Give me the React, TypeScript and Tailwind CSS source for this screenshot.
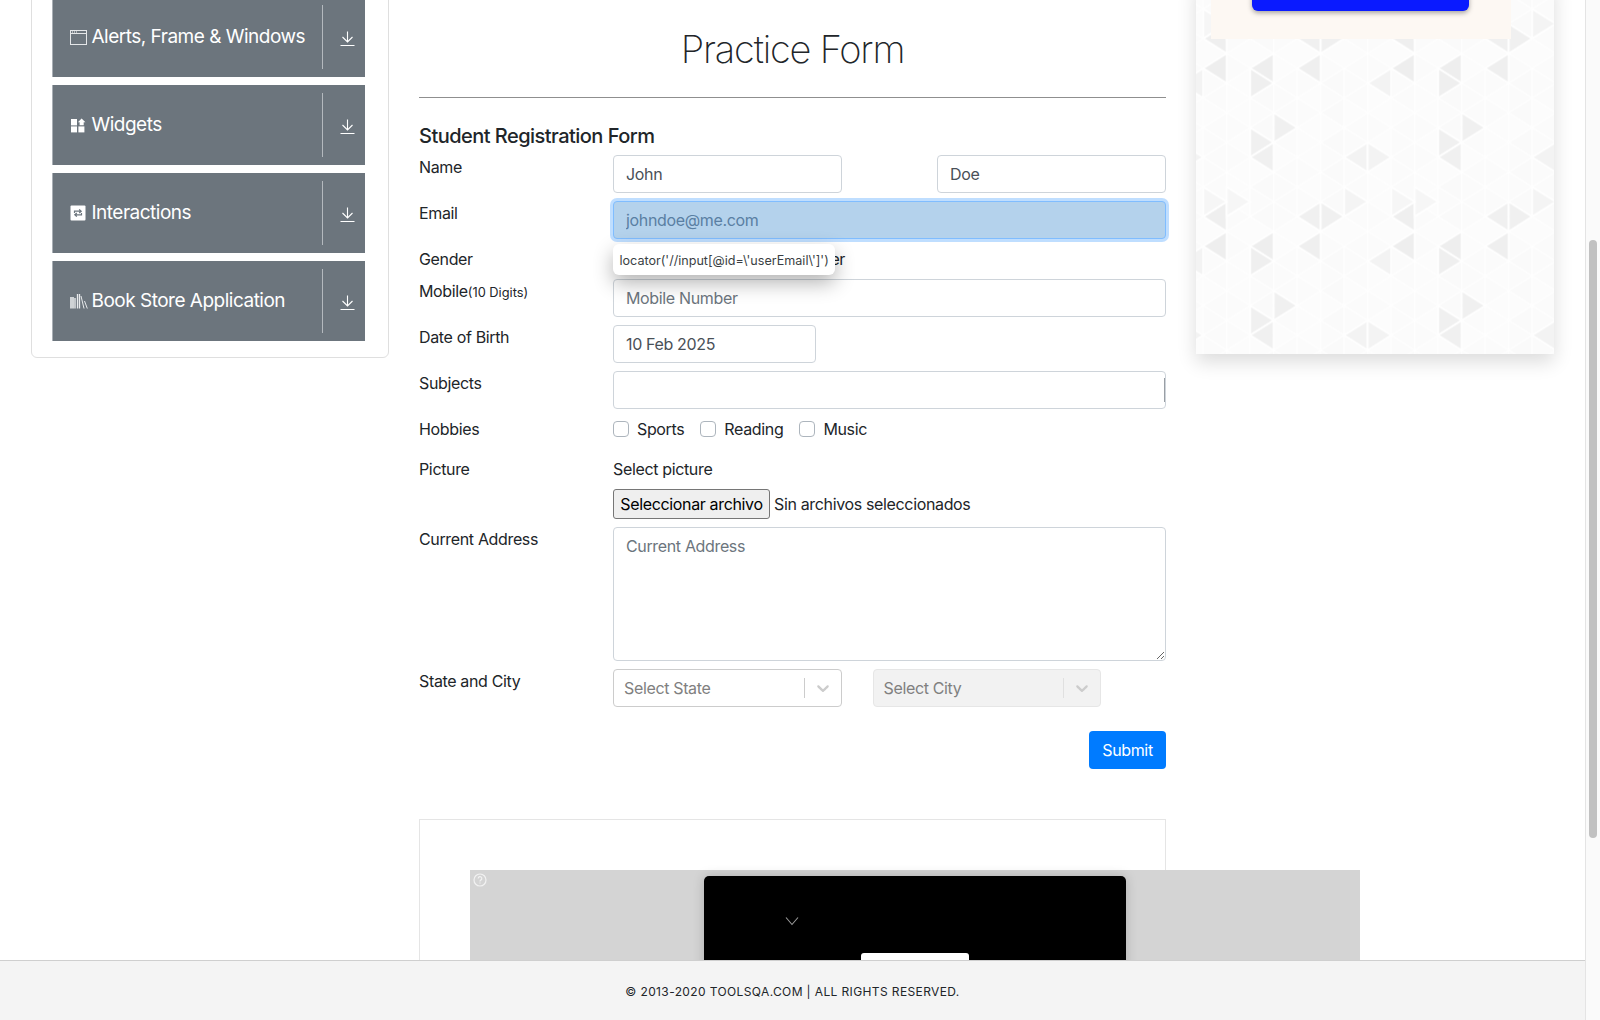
import type { ReactNode } from 'react'

const TILE_W = 188
const TILE_H = 178
const COL = 23.5
const ROW = 14.83

// dir, edge column, centre row, shade
const darkTriangles: [string, number, number, string][] = [
  ['L', 1, 1, '#eeeeee'],
  ['L', 3, 1, '#eeeeee'],
  ['L', 5, 1, '#efefef'],
  ['R', 2, 2, '#efefef'],
  ['L', 8, 2, '#f3f3f3'],
  ['R', 3, 5, '#f0f0f0'],
  ['R', 2, 6, '#f0f0f0'],
  ['L', 3, 7, '#f0f0f0'],
  ['L', 7, 7, '#f3f3f3'],
  ['R', 7, 7, '#f3f3f3'],
  ['L', 1, 11, '#efefef'],
  ['L', 5, 11, '#f0f0f0'],
  ['R', 5, 11, '#f0f0f0'],
  ['R', 6, 10, '#f4f4f4'],
  ['R', 1, 10, '#f6f6f6'],
  ['R', 0, 10, '#f6f6f6'],
]

function trianglePoints(dir: string, edge: number, c: number) {
  const x = edge * COL
  const y = c * ROW
  const tip = dir === 'L' ? x - COL : x + COL
  return `${x},${y - ROW} ${x},${y + ROW} ${tip},${y}`
}

function baseTriangles() {
  const out: { dir: string; edge: number; c: number; fill: string }[] = []
  const shades = ['#fbfbfb', '#fafafa', '#fbfbfb', '#fbfbfb', '#fcfcfc', '#fcfcfc']
  for (let s = 0; s < 8; s++) {
    for (let c = 1; c < 12; c++) {
      if ((s + 1 + c) % 2 === 0) out.push({ dir: 'L', edge: s + 1, c, fill: shades[(s * 5 + c * 3) % 6] })
      if ((s + c) % 2 === 0) out.push({ dir: 'R', edge: s, c, fill: shades[(s * 7 + c) % 6] })
    }
  }
  return out
}

function TrianglePattern() {
  return (
    <svg className="absolute inset-0 h-full w-full" aria-hidden="true">
      <defs>
        <pattern id="tri" x="7.2" y="73.47" width={TILE_W} height={TILE_H} patternUnits="userSpaceOnUse">
          <rect width={TILE_W} height={TILE_H} fill="#fcfcfc" />
          {baseTriangles().map((t, i) => (
            <polygon key={i} points={trianglePoints(t.dir, t.edge, t.c)} fill={t.fill} stroke="#ffffff" strokeWidth="1.2" />
          ))}
          {darkTriangles.map(([dir, edge, c, fill], i) => (
            <polygon key={i} points={trianglePoints(dir, edge, c)} fill={fill} stroke="#ffffff" strokeWidth="1.8" />
          ))}
        </pattern>
      </defs>
      <rect width="100%" height="100%" fill="url(#tri)" />
    </svg>
  )
}

function FrameIcon() {
  return (
    <svg width="17" height="15" viewBox="0 0 17 15" fill="none" stroke="#e4e6e8" strokeWidth="1">
      <rect x="0.5" y="0.5" width="16" height="14" />
      <line x1="0.5" y1="3.5" x2="16.5" y2="3.5" />
      <path d="M2 2h1M4 2h1M6 2h1" stroke="#ffffff" />
    </svg>
  )
}

function WidgetIcon() {
  return (
    <svg width="16" height="15" viewBox="0 0 16 15" fill="#ffffff">
      <rect x="1" y="1" width="6" height="6.4" />
      <rect x="1" y="8.4" width="6" height="6" />
      <rect x="8.4" y="8.4" width="6" height="6" />
      <path d="M11.6 0.4L15.4 4.2L13.7 4.2L13.7 7.2L9.6 7.2L9.6 4.2L7.9 4.2Z" />
    </svg>
  )
}

function InteractionIcon() {
  return (
    <svg width="16" height="16" viewBox="0 0 16 16">
      <rect x="0.5" y="0.5" width="15" height="15" rx="1" fill="#ffffff" />
      <path d="M4.5 8V6.2h6M9.2 4.4l2 1.8-2 1.8M11.5 8v1.8h-6M6.8 11.6l-2-1.8 2-1.8" fill="none" stroke="#6c757d" strokeWidth="1.2" />
    </svg>
  )
}

function BooksIcon() {
  return (
    <svg width="18" height="16" viewBox="0 0 18 16" fill="none" stroke="#e8eaec">
      <path d="M1 4v11.5M3 4v11.5" strokeWidth="1.6" />
      <path d="M5 5v10.5" strokeWidth="1.4" />
      <path d="M7.5 1v14.5M9.5 1v14.5" strokeWidth="1.3" />
      <path d="M11 3l3 12.5M14.5 8l2.8 7.5" strokeWidth="1" />
    </svg>
  )
}

function DownloadIcon() {
  return (
    <svg width="15" height="15" viewBox="0 0 15 15" fill="none" stroke="#ffffff" strokeWidth="1.1">
      <path d="M7.5 0.5V11M2.5 6l5 5 5-5M0.5 14.5h14" />
    </svg>
  )
}

const groups: { name: string; icon: ReactNode }[] = [
  { name: 'Alerts, Frame & Windows', icon: <FrameIcon /> },
  { name: 'Widgets', icon: <WidgetIcon /> },
  { name: 'Interactions', icon: <InteractionIcon /> },
  { name: 'Book Store Application', icon: <BooksIcon /> },
]

function Sidebar() {
  return (
    <div className="ml-[31px] -mt-[20px] h-fit w-[358px] shrink-0 rounded-[6px] border border-[#dfdfdf] bg-white pt-[16px] pb-[16px] pl-[20px] pr-[23px]">
      <div className="flex flex-col gap-[8px]">
        {groups.map((g) => (
          <div key={g.name} className="flex h-[80px] items-center border-l border-[#a9afb5] bg-[#6c757d] text-white">
            <div className="flex min-w-0 flex-1 items-center pl-[17px]">
              <span className="flex w-[22px] shrink-0 items-center">{g.icon}</span>
              <span className="mt-[1px] -ml-[0.5px] text-[19px] tracking-[-0.5px] whitespace-nowrap">{g.name}</span>
            </div>
            <div className="h-[64px] w-px bg-[#b4b9be]" />
            <div className="flex w-[42px] items-center justify-center pt-[2px] pl-[6px]">
              <DownloadIcon />
            </div>
          </div>
        ))}
      </div>
    </div>
  )
}

function Row({ label, children, className = 'mb-[8px]' }: { label: ReactNode; children: ReactNode; className?: string }) {
  return (
    <div className={`flex ${className}`}>
      <div className="w-[194px] shrink-0 text-[16px] leading-[24px] text-[#212529]">{label}</div>
      {children}
    </div>
  )
}

const inputCls =
  'h-[38px] rounded-[4px] border border-[#ced4da] bg-white px-[12px] text-[16px] text-[#495057] placeholder:text-[#6c757d] outline-none'

function Chevron({ color }: { color: string }) {
  return (
    <svg width="20" height="20" viewBox="0 0 20 20" fill={color}>
      <path d="M4.516 7.548c0.436-0.446 1.043-0.481 1.576 0l3.908 3.747 3.908-3.747c0.533-0.481 1.141-0.446 1.574 0 0.436 0.445 0.408 1.197 0 1.615-0.406 0.418-4.695 4.502-4.695 4.502-0.217 0.223-0.502 0.335-0.787 0.335s-0.57-0.112-0.789-0.335c0 0-4.287-4.084-4.695-4.502s-0.436-1.17 0-1.615z" />
    </svg>
  )
}

function FakeSelect({ text, disabled }: { text: string; disabled?: boolean }) {
  return (
    <div
      className={`flex h-[38px] w-[228.5px] items-center rounded-[4px] border pl-[10px] ${
        disabled ? 'border-[#e6e6e6] bg-[#f2f2f2]' : 'border-[#cccccc] bg-white'
      }`}
    >
      <span className="flex-1 text-[16px] text-[#808080]">{text}</span>
      <span className={`h-[20px] w-px ${disabled ? 'bg-[#e0e0e0]' : 'bg-[#cccccc]'}`} />
      <span className="flex w-[36px] items-center justify-center">
        <Chevron color="#cccccc" />
      </span>
    </div>
  )
}

function CheckOption({ label, className }: { label: string; className: string }) {
  return (
    <label className={`flex items-center ${className}`}>
      <span className="mr-[8px] h-[16px] w-[16px] rounded-[4px] border border-[#adb5bd] bg-white" />
      <span className="text-[16px] leading-[24px] text-[#212529]">{label}</span>
    </label>
  )
}

function RadioOption({ label }: { label: string }) {
  return (
    <label className="mr-[16px] flex items-center">
      <span className="mr-[8px] h-[16px] w-[16px] rounded-full border border-[#adb5bd] bg-white" />
      <span className="text-[16px] leading-[24px] text-[#212529]">{label}</span>
    </label>
  )
}

function PracticeForm() {
  return (
    <div className="ml-[30px] w-[747px] shrink-0 pt-[25px]">
      <h1 className="text-center text-[38px] leading-[48px] font-extralight tracking-[-1.2px] text-[#212529]">Practice Form</h1>
      <div className="mt-[24px] h-px bg-[#8f8f8f]" />
      <h5 className="mt-[26px] mb-[7px] text-[20px] leading-[24px] font-medium tracking-[-0.53px] text-[#212529]">
        Student Registration Form
      </h5>

      <Row label="Name">
        <input readOnly className={`${inputCls} w-[228.5px]`} value="John" />
        <input readOnly className={`${inputCls} ml-[95.5px] w-[229px]`} value="Doe" />
      </Row>
      <Row label="Email">
        <input
          readOnly
          className="h-[38px] flex-1 rounded-[4px] border border-[#80bdff] bg-[#b4d2ec] px-[12px] text-[16px] text-[#5a7fa3] shadow-[0_0_0_3px_rgba(0,123,255,0.25)] outline-none"
          value="johndoe@me.com"
        />
      </Row>
      <div className="relative">
        <Row label="Gender">
          <div className="flex">
            <RadioOption label="Male" />
            <RadioOption label="Female" />
            <RadioOption label="Other" />
          </div>
        </Row>
        <div className="absolute top-[-3px] left-[194px] flex h-[31px] w-[222px] items-center rounded-[6px] bg-white pt-[3px] pl-[6.5px] text-[12.6px] tracking-normal whitespace-nowrap text-[#3a3f44] shadow-[0_8px_20px_rgba(0,0,0,0.3)]">
          {"locator('//input[@id=\\'userEmail\\']')"}
        </div>
      </div>
      <Row
        label={
          <>
            Mobile<span className="text-[12.8px] tracking-normal">(10 Digits)</span>
          </>
        }
      >
        <input readOnly className={`${inputCls} flex-1`} placeholder="Mobile Number" />
      </Row>
      <Row label="Date of Birth">
        <input readOnly className={`${inputCls} w-[203px]`} value="10 Feb 2025" />
      </Row>
      <Row label="Subjects">
        <div className="relative flex-1">
          <input readOnly className={`${inputCls} w-full`} />
          <span className="absolute top-[7px] right-[1px] h-[24px] w-px bg-[#9a9fa5]" />
        </div>
      </Row>
      <Row label="Hobbies" className="mb-[16px]">
        <div className="flex">
          <CheckOption label="Sports" className="mr-[16px]" />
          <CheckOption label="Reading" className="mr-[16px]" />
          <CheckOption label="Music" className="" />
        </div>
      </Row>
      <Row label="Picture">
        <div>
          <div className="text-[16px] leading-[24px] text-[#212529]">Select picture</div>
          <div className="mt-[8px] flex items-center">
            <button
              type="button"
              className="h-[30px] w-[157px] rounded-[3px] border border-[#767676] bg-[#efefef] text-[16px] text-black"
            >
              Seleccionar archivo
            </button>
            <span className="ml-[4px] text-[16px] text-[#212529]">Sin archivos seleccionados</span>
          </div>
        </div>
      </Row>
      <Row label="Current Address">
        <textarea readOnly className="h-[134px] flex-1 rounded-[4px] border border-[#ced4da] bg-white px-[12px] py-[6px] text-[16px] placeholder:text-[#6c757d] outline-none" placeholder="Current Address" />
      </Row>
      <Row label="State and City" className="mb-[24px]">
        <div className="flex gap-[31px]">
          <FakeSelect text="Select State" />
          <FakeSelect text="Select City" disabled />
        </div>
      </Row>
      <div className="flex justify-end">
        <button type="button" className="h-[38px] w-[77px] rounded-[4px] bg-[#007bff] text-[16px] text-white">
          Submit
        </button>
      </div>

      <div className="mt-[50px] h-[200px] border border-[#e5e5e5] pt-[50px]">
        <div className="relative ml-[50px] h-[120px] w-[890px] bg-[#d4d4d4] pt-[6px]">
          <svg className="absolute top-[3px] left-[3px]" width="14" height="14" viewBox="0 0 14 14" fill="none" stroke="#f2f2f2" strokeWidth="1.2">
            <circle cx="7" cy="7" r="6" />
            <path d="M5.2 5.5a1.8 1.8 0 1 1 2.6 1.6c-.6.3-.8.7-.8 1.3M7 9.6v1" />
          </svg>
          <div className="mx-auto h-[110px] w-[422px] rounded-t-[5px] bg-black pt-[40px] shadow-[0_0_12px_rgba(0,0,0,0.18)]">
            <svg className="ml-[81px]" width="14" height="10" viewBox="0 0 14 10" fill="none" stroke="#9a9a9a" strokeWidth="1.1">
              <path d="M1 1.5l6 7 6-7" />
            </svg>
            <div className="mx-auto mt-[27px] h-[30px] w-[108px] rounded-[3px] bg-white" />
          </div>
        </div>
      </div>
    </div>
  )
}

function RightPanel() {
  return (
    <div className="relative ml-[30px] -mt-[20px] h-[374px] w-[358px] shrink-0 bg-[#fcfcfc] shadow-[0_8px_18px_rgba(0,0,0,0.14)]">
      <TrianglePattern />
      <div className="relative mx-[15px] h-[59px] w-[300px] bg-[#fdf8f3]">
        <div className="ml-[41px] h-[31px] w-[217px] rounded-[6px] bg-[#0a1aff] shadow-[0_2px_5px_rgba(0,0,0,0.35)]" />
      </div>
    </div>
  )
}

export default function App() {
  return (
    <div className="flex h-[1020px] overflow-hidden bg-white font-[Inter,'Liberation_Sans',sans-serif] tracking-[-0.35px]">
      <div className="flex min-w-0 flex-1 flex-col">
        <div className="relative flex min-h-0 flex-1 overflow-hidden">
          <Sidebar />
          <PracticeForm />
          <RightPanel />
        </div>
        <footer className="flex h-[60px] shrink-0 items-center justify-center border-t border-[#cfcfcf] bg-[#f4f4f4] pt-[2px] text-[12px] tracking-[0.38px] text-[#212529]">
          © 2013-2020 TOOLSQA.COM | ALL RIGHTS RESERVED.
        </footer>
      </div>
      <div className="w-[15px] shrink-0 border-l border-[#e4e4e4] bg-[#fafafa] pt-[240px] pl-[3px]">
        <div className="h-[598px] w-[8px] rounded-full bg-[#c1c1c1]" />
      </div>
    </div>
  )
}
